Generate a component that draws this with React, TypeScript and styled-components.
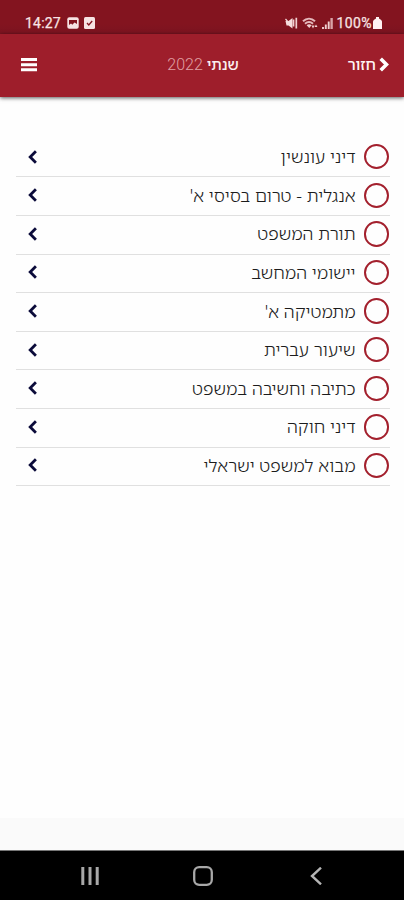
import React from 'react';
import styled, { createGlobalStyle } from 'styled-components';

const GlobalStyle = createGlobalStyle`
  * { box-sizing: border-box; }
  body { margin: 0; background: #fff; }
`;

const Screen = styled.div`
  width: 404px;
  height: 900px;
  display: flex;
  flex-direction: column;
  overflow: hidden;
  background: #fefefe;
  font-family: 'Noto Sans Hebrew', 'Open Sans', 'Noto Sans', sans-serif;
`;

const StatusBar = styled.div`
  height: 34px;
  flex: none;
  display: flex;
  align-items: center;
  justify-content: space-between;
  padding: 12px 22px 0 25px;
  background: linear-gradient(#83141f 0 70%, #7b1420);
  color: #f9e4e4;
  font: 400 14px/22px Roboto, sans-serif;
`;

const StatusGroup = styled.div<{ $gap: number }>`
  display: flex;
  align-items: center;
  gap: ${(p) => p.$gap}px;
  svg { display: block; }
`;

const Clock = styled.span`
  width: 36px;
  margin-right: 1px;
  letter-spacing: 0.2px;
  -webkit-text-stroke: 0.25px;
`;

const Header = styled.header`
  height: 63px;
  flex: none;
  display: grid;
  grid-template-columns: 1fr auto 1fr;
  align-items: center;
  padding: 0 15px 2px 21px;
  background: #9e1e2b;
  box-shadow: 0 1px 4px rgba(0, 0, 0, 0.65);
  color: #fbeeee;
  z-index: 1;
`;

const MenuButton = styled.button`
  justify-self: start;
  display: flex;
  padding: 0;
  border: 0;
  background: none;
`;

const Title = styled.h1`
  margin: 0 4px 0 0;
  direction: rtl;
  font-size: 15px;
  font-weight: 500;
  line-height: 24px;
  white-space: nowrap;
`;

const Year = styled.span`
  color: #e0a0a4;
  font-family: Roboto, sans-serif;
  font-size: 16px;
  font-weight: 300;
`;

const BackButton = styled.button`
  justify-self: end;
  display: flex;
  align-items: center;
  gap: 3px;
  direction: rtl;
  padding: 0;
  border: 0;
  background: none;
  color: #fff4f4;
  font: 500 15.5px/24px 'Noto Sans Hebrew', 'Open Sans', sans-serif;
`;

const BackLabel = styled.span`
  margin-top: -1px;
`;

const Content = styled.main`
  flex: 1;
  padding: 41.9px 14px 0 16px;
`;

const List = styled.ul`
  margin: 0;
  padding: 0;
  list-style: none;
  direction: rtl;
`;

const Row = styled.li`
  height: 38.6px;
  display: flex;
  align-items: center;
  padding: 0 1px 2px 11px;
  border-bottom: 1.5px solid #e0e0e0;
`;

const Radio = styled.span`
  flex: none;
  width: 25.5px;
  height: 25.5px;
  border: 2px solid #a3202d;
  border-radius: 50%;
`;

const Subject = styled.span`
  flex: 1;
  padding: 0 8px 1px 0;
  color: #1c1c1c;
  font-size: 17.7px;
  font-weight: 300;
  line-height: 24px;
  white-space: nowrap;
`;

const FooterStrip = styled.div`
  height: 32px;
  flex: none;
  background: #fafafa;
`;

const NavBar = styled.nav`
  height: 50px;
  flex: none;
  display: grid;
  grid-template-columns: repeat(3, 113px);
  justify-content: center;
  align-items: center;
  justify-items: center;
  border-top: 1px solid #777;
  padding-left: 2px;
  background: #000;
`;

const BatteryGroup = styled.span`
  display: flex;
  align-items: center;
  gap: 1px;
  letter-spacing: 0.4px;
  -webkit-text-stroke: 0.25px;
`;

const subjects = [
  'דיני עונשין',
  "אנגלית - טרום בסיסי א'",
  'תורת המשפט',
  'יישומי המחשב',
  "מתמטיקה א'",
  'שיעור עברית',
  'כתיבה וחשיבה במשפט',
  'דיני חוקה',
  'מבוא למשפט ישראלי',
];

const PictureIcon = () => (
  <svg width="12" height="12" viewBox="0 0 12 12">
    <rect x="0.3" y="0.3" width="11.4" height="11.4" rx="2" fill="#f6e3e3" />
    <path d="M2 3h8v4L7.500 5.500 5.300 7.800 4 6.500 2 8z" fill="#83141f" />
  </svg>
);

const CheckedIcon = () => (
  <svg width="11" height="12" viewBox="0 0 11 12">
    <rect width="11" height="12" rx="1.5" fill="#f6e3e3" />
    <path d="M3 6l1.800 2 3.400-4" fill="none" stroke="#83141f" strokeWidth="1.300" />
  </svg>
);

const MutedIcon = () => (
  <svg width="13" height="12" viewBox="0 0 13 12">
    <path d="M0.500 4h3L7.500 1v10.500L3.500 8.500h-2z" fill="#f6dddd" />
    <path d="M0.500 2l4 4.500" stroke="#f6dddd" strokeWidth="1.200" />
    <path d="M8.500 2.500v7M11.300 0.800v10.700" stroke="#f0cfd0" strokeWidth="1.700" />
  </svg>
);

const WifiIcon = () => (
  <svg width="16" height="12" viewBox="0 0 16 12">
    <path d="M1 4.200c3.600-3.400 8.400-3.400 12 0M3 6.700c2.500-2.200 5.500-2.200 8 0" fill="none" stroke="#e5b9bc" strokeWidth="2" />
    <path d="M4.600 8.200c1.600-1.300 3.400-1.300 5 0L7.300 11z" fill="#f0cfd0" />
    <path d="M9.500 8.500h3L11 11.500zM12.500 10h3L14 7.500z" fill="#f0cfd0" />
  </svg>
);

const SignalIcon = () => (
  <svg width="11" height="11" viewBox="0 0 11 11">
    <path d="M1 9V11M3.800 6.500v4.500M6.700 3.500V11" stroke="#f0cfd0" strokeWidth="1.900" />
    <path d="M9.600 0v11" stroke="#d9a3a7" strokeWidth="2.400" />
  </svg>
);

const BatteryIcon = () => (
  <svg width="9" height="12" viewBox="0 0 9 12">
    <path d="M3 0h3v1.500Q9 3 9 4.500V12H0V4.500Q0 3 3 1.500z" fill="#fff1f1" />
  </svg>
);

const MenuIcon = () => (
  <svg width="16" height="14" viewBox="0 0 16 14">
    <path d="M0 1.600h16M0 6.700h16M0 11.800h16" stroke="#fff" strokeWidth="3" />
  </svg>
);

const BackChevron = () => (
  <svg width="10" height="15" viewBox="0 0 10 15">
    <path d="M1.700 1.700L7.500 7.500l-5.800 5.800" fill="none" stroke="#fff" strokeWidth="3.600" />
  </svg>
);

const RowChevron = () => (
  <svg width="11" height="14" viewBox="0 0 11 14">
    <path d="M8.900 1.300L3.200 7l5.700 5.700" fill="none" stroke="#0b0b3a" strokeWidth="2.800" />
  </svg>
);

const RecentsIcon = () => (
  <svg width="18" height="18" viewBox="0 0 18 18">
    <path d="M1.800 0v18M9 0v18M16.200 0v18" stroke="#a8a8a8" strokeWidth="3" />
  </svg>
);

const HomeIcon = () => (
  <svg width="20" height="20" viewBox="0 0 20 20">
    <rect x="1.200" y="1.200" width="17.600" height="17.600" rx="5" fill="none" stroke="#a8a8a8" strokeWidth="2.300" />
  </svg>
);

const NavBackIcon = () => (
  <svg width="12" height="18" viewBox="0 0 12 18">
    <path d="M11 0.700L2 9l9 8.300" fill="none" stroke="#b5b5b5" strokeWidth="2.400" />
  </svg>
);

export default function App() {
  return (
    <Screen>
      <GlobalStyle />
      <StatusBar>
        <StatusGroup $gap={5}>
          <Clock>14:27</Clock>
          <PictureIcon />
          <CheckedIcon />
        </StatusGroup>
        <StatusGroup $gap={4}>
          <MutedIcon />
          <WifiIcon />
          <SignalIcon />
          <BatteryGroup>100%<BatteryIcon /></BatteryGroup>
        </StatusGroup>
      </StatusBar>
      <Header>
        <MenuButton aria-label="תפריט"><MenuIcon /></MenuButton>
        <Title>שנתי <Year>2022</Year></Title>
        <BackButton><BackChevron /><BackLabel>חזור</BackLabel></BackButton>
      </Header>
      <Content>
        <List>
          {subjects.map((name) => (
            <Row key={name}>
              <Radio />
              <Subject>{name}</Subject>
              <RowChevron />
            </Row>
          ))}
        </List>
      </Content>
      <FooterStrip />
      <NavBar>
        <RecentsIcon />
        <HomeIcon />
        <NavBackIcon />
      </NavBar>
    </Screen>
  );
}
